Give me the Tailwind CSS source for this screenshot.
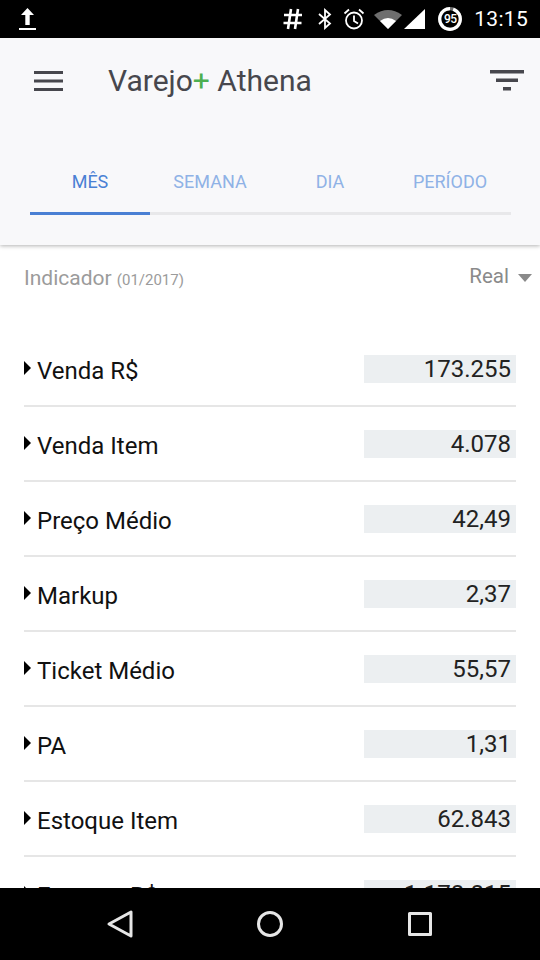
<!DOCTYPE html>
<html lang="en">
<head>
  <meta charset="UTF-8"/>
  <meta name="viewport" content="width=device-width, initial-scale=1.0"/>
  <title>Varejo+ Athena</title>
  <script src="https://cdn.jsdelivr.net/npm/@tailwindcss/browser@4"></script>
</head>
<body class="bg-white font-['Roboto',sans-serif]">
<div class="w-[540px] h-[960px] flex flex-col overflow-hidden">

  <!-- Status bar -->
  <div class="h-[38px] shrink-0 bg-black flex items-center justify-between pl-[19px] pr-[12px] text-white">
    <svg width="17" height="26" viewBox="0 0 17 26" fill="#fff"><path d="M8.5 2 L15 9 H10.7 V19 H6.3 V9 H2 Z"/><rect y="22" width="17" height="2"/></svg>
    <div class="flex items-center">
      <svg width="20" height="22" viewBox="0 0 20 22" stroke="#fff" stroke-width="2.6" fill="none" class="mr-[15px]"><path d="M8 1 L5 21 M15 1 L12 21 M1 7 H19 M0.5 15 H18.5"/></svg>
      <svg width="14" height="22" viewBox="0 0 14 22" stroke="#fff" stroke-width="1.8" fill="none" class="mr-[11px]"><path d="M1 6 L12 15.5 L7 20 V2 L12 6.5 L1 16"/></svg>
      <svg width="22" height="22" viewBox="0 0 22 22" stroke="#fff" stroke-width="1.8" fill="none" class="mr-[8px]"><circle cx="11" cy="12.5" r="8"/><path d="M11 7.5 V13 L15 15.5 M1.5 5.5 L6 1.5 M20.5 5.5 L16 1.5"/></svg>
      <svg width="30" height="22" viewBox="0 0 30 22" class="mr-[1px]"><path d="M1 7 Q15 -3 29 7 L15 21 Z" fill="#6e6e6e"/><path d="M7 13 Q15 7 23 13 L15 21 Z" fill="#fff"/></svg>
      <svg width="22" height="22" viewBox="0 0 22 22" fill="#fff" class="mr-[12px]"><path d="M21 1 V21 H0 Z"/></svg>
      <div class="relative w-[24px] h-[24px] mr-[12px] flex items-center justify-center">
        <svg width="24" height="24" viewBox="0 0 24 24" fill="none" class="absolute inset-0"><circle cx="12" cy="12" r="10.3" stroke="#6e6e6e" stroke-width="3.2"/><circle cx="12" cy="12" r="10.3" stroke="#fff" stroke-width="3.2" pathLength="100" stroke-dasharray="95 5" transform="rotate(-72 12 12)"/></svg>
        <span class="text-[12px] font-medium leading-none tracking-[-0.5px]">95</span>
      </div>
      <span class="text-[21px] leading-none tracking-[0.3px]">13:15</span>
    </div>
  </div>

  <!-- Header -->
  <div class="h-[207px] shrink-0 bg-[#f8f8fa] shadow-[0_1px_4px_rgba(0,0,0,0.3)] relative z-10 flex flex-col">
    <div class="h-[86px] flex items-center pl-[34px] pr-[16px]">
      <svg width="29" height="20" viewBox="0 0 29 20" fill="#47474d"><rect width="29" height="3"/><rect y="8.5" width="29" height="3"/><rect y="17" width="29" height="3"/></svg>
      <div class="ml-[45px] text-[30px] leading-none text-[#47474d]">Varejo<span class="text-[#4caf50]">+</span> Athena</div>
      <svg width="34" height="22" viewBox="0 0 34 22" fill="#47474d" class="ml-auto"><rect width="34" height="3.5"/><rect x="6" y="8.5" width="22" height="3.5"/><rect x="13" y="17" width="8" height="3.5"/></svg>
    </div>
    <div class="mt-[39px] ml-[30px] w-[481px] flex h-[52px] border-b-[3px] border-[#e8e8ea] text-[18px] text-[#8fb2e6]">
      <div class="w-[120px] h-[52px] pt-[5px] text-center border-b-[3px] border-[#4a80d4] text-[#4a80d4]">MÊS</div>
      <div class="w-[120px] pt-[5px] text-center">SEMANA</div>
      <div class="w-[120px] pt-[5px] text-center">DIA</div>
      <div class="w-[120px] pt-[5px] text-center">PERÍODO</div>
    </div>
  </div>

  <!-- Indicators -->
  <div class="flex-1 overflow-hidden px-[24px]">
    <div class="flex justify-between pt-[19px] h-[87px] mr-[-16px]">
      <div class="text-[#9b9b9b] text-[21px] leading-[28px]">Indicador <span class="text-[15px]">(01/2017)</span></div>
      <div class="flex items-start text-[#8a8a8a] text-[20.5px] leading-[24px]">Real
        <svg width="14" height="8" viewBox="0 0 14 8" fill="#8a8a8a" class="ml-[9px] mt-[10px]"><path d="M0 0 H14 L7 8 Z"/></svg>
      </div>
    </div>

    <div class="h-[75px] border-b-2 border-[#e6e6e6] flex items-start pt-[23px] justify-between">
      <div class="flex items-start"><svg width="7" height="14" viewBox="0 0 7 14" fill="#000" class="mt-[6px] mr-[6px]"><path d="M0 0 L7 7 L0 14 Z"/></svg><span class="mt-[2px] text-[24px] leading-[28px] text-[#111]">Venda R$</span></div>
      <div class="w-[152px] h-[28px] bg-[#eceff1] text-right pr-[5px] text-[24px] leading-[28px] text-[#222]">173.255</div>
    </div>
    <div class="h-[75px] border-b-2 border-[#e6e6e6] flex items-start pt-[23px] justify-between">
      <div class="flex items-start"><svg width="7" height="14" viewBox="0 0 7 14" fill="#000" class="mt-[6px] mr-[6px]"><path d="M0 0 L7 7 L0 14 Z"/></svg><span class="mt-[2px] text-[24px] leading-[28px] text-[#111]">Venda Item</span></div>
      <div class="w-[152px] h-[28px] bg-[#eceff1] text-right pr-[5px] text-[24px] leading-[28px] text-[#222]">4.078</div>
    </div>
    <div class="h-[75px] border-b-2 border-[#e6e6e6] flex items-start pt-[23px] justify-between">
      <div class="flex items-start"><svg width="7" height="14" viewBox="0 0 7 14" fill="#000" class="mt-[6px] mr-[6px]"><path d="M0 0 L7 7 L0 14 Z"/></svg><span class="mt-[2px] text-[24px] leading-[28px] text-[#111]">Preço Médio</span></div>
      <div class="w-[152px] h-[28px] bg-[#eceff1] text-right pr-[5px] text-[24px] leading-[28px] text-[#222]">42,49</div>
    </div>
    <div class="h-[75px] border-b-2 border-[#e6e6e6] flex items-start pt-[23px] justify-between">
      <div class="flex items-start"><svg width="7" height="14" viewBox="0 0 7 14" fill="#000" class="mt-[6px] mr-[6px]"><path d="M0 0 L7 7 L0 14 Z"/></svg><span class="mt-[2px] text-[24px] leading-[28px] text-[#111]">Markup</span></div>
      <div class="w-[152px] h-[28px] bg-[#eceff1] text-right pr-[5px] text-[24px] leading-[28px] text-[#222]">2,37</div>
    </div>
    <div class="h-[75px] border-b-2 border-[#e6e6e6] flex items-start pt-[23px] justify-between">
      <div class="flex items-start"><svg width="7" height="14" viewBox="0 0 7 14" fill="#000" class="mt-[6px] mr-[6px]"><path d="M0 0 L7 7 L0 14 Z"/></svg><span class="mt-[2px] text-[24px] leading-[28px] text-[#111]">Ticket Médio</span></div>
      <div class="w-[152px] h-[28px] bg-[#eceff1] text-right pr-[5px] text-[24px] leading-[28px] text-[#222]">55,57</div>
    </div>
    <div class="h-[75px] border-b-2 border-[#e6e6e6] flex items-start pt-[23px] justify-between">
      <div class="flex items-start"><svg width="7" height="14" viewBox="0 0 7 14" fill="#000" class="mt-[6px] mr-[6px]"><path d="M0 0 L7 7 L0 14 Z"/></svg><span class="mt-[2px] text-[24px] leading-[28px] text-[#111]">PA</span></div>
      <div class="w-[152px] h-[28px] bg-[#eceff1] text-right pr-[5px] text-[24px] leading-[28px] text-[#222]">1,31</div>
    </div>
    <div class="h-[75px] border-b-2 border-[#e6e6e6] flex items-start pt-[23px] justify-between">
      <div class="flex items-start"><svg width="7" height="14" viewBox="0 0 7 14" fill="#000" class="mt-[6px] mr-[6px]"><path d="M0 0 L7 7 L0 14 Z"/></svg><span class="mt-[2px] text-[24px] leading-[28px] text-[#111]">Estoque Item</span></div>
      <div class="w-[152px] h-[28px] bg-[#eceff1] text-right pr-[5px] text-[24px] leading-[28px] text-[#222]">62.843</div>
    </div>
    <div class="h-[75px] border-b-2 border-[#e6e6e6] flex items-start pt-[23px] justify-between">
      <div class="flex items-start"><svg width="7" height="14" viewBox="0 0 7 14" fill="#000" class="mt-[6px] mr-[6px]"><path d="M0 0 L7 7 L0 14 Z"/></svg><span class="mt-[2px] text-[24px] leading-[28px] text-[#111]">Estoque R$</span></div>
      <div class="w-[152px] h-[28px] bg-[#eceff1] text-right pr-[5px] text-[24px] leading-[28px] text-[#222]">1.178.815</div>
    </div>
  </div>

  <!-- Nav bar -->
  <div class="h-[72px] shrink-0 bg-black flex items-center justify-center">
    <div class="w-[150px] flex justify-center"><svg width="28" height="30" viewBox="0 0 28 30" fill="none" stroke="#e6e6e6" stroke-width="3" stroke-linejoin="round"><path d="M3 15 L25 3 V27 Z"/></svg></div>
    <div class="w-[150px] flex justify-center"><svg width="28" height="28" viewBox="0 0 28 28" fill="none" stroke="#e6e6e6" stroke-width="3"><circle cx="14" cy="14" r="11.5"/></svg></div>
    <div class="w-[150px] flex justify-center"><svg width="26" height="26" viewBox="0 0 26 26" fill="none" stroke="#e6e6e6" stroke-width="3" stroke-linejoin="round"><rect x="2.5" y="2.5" width="21" height="21"/></svg></div>
  </div>
</div>
</body>
</html>
